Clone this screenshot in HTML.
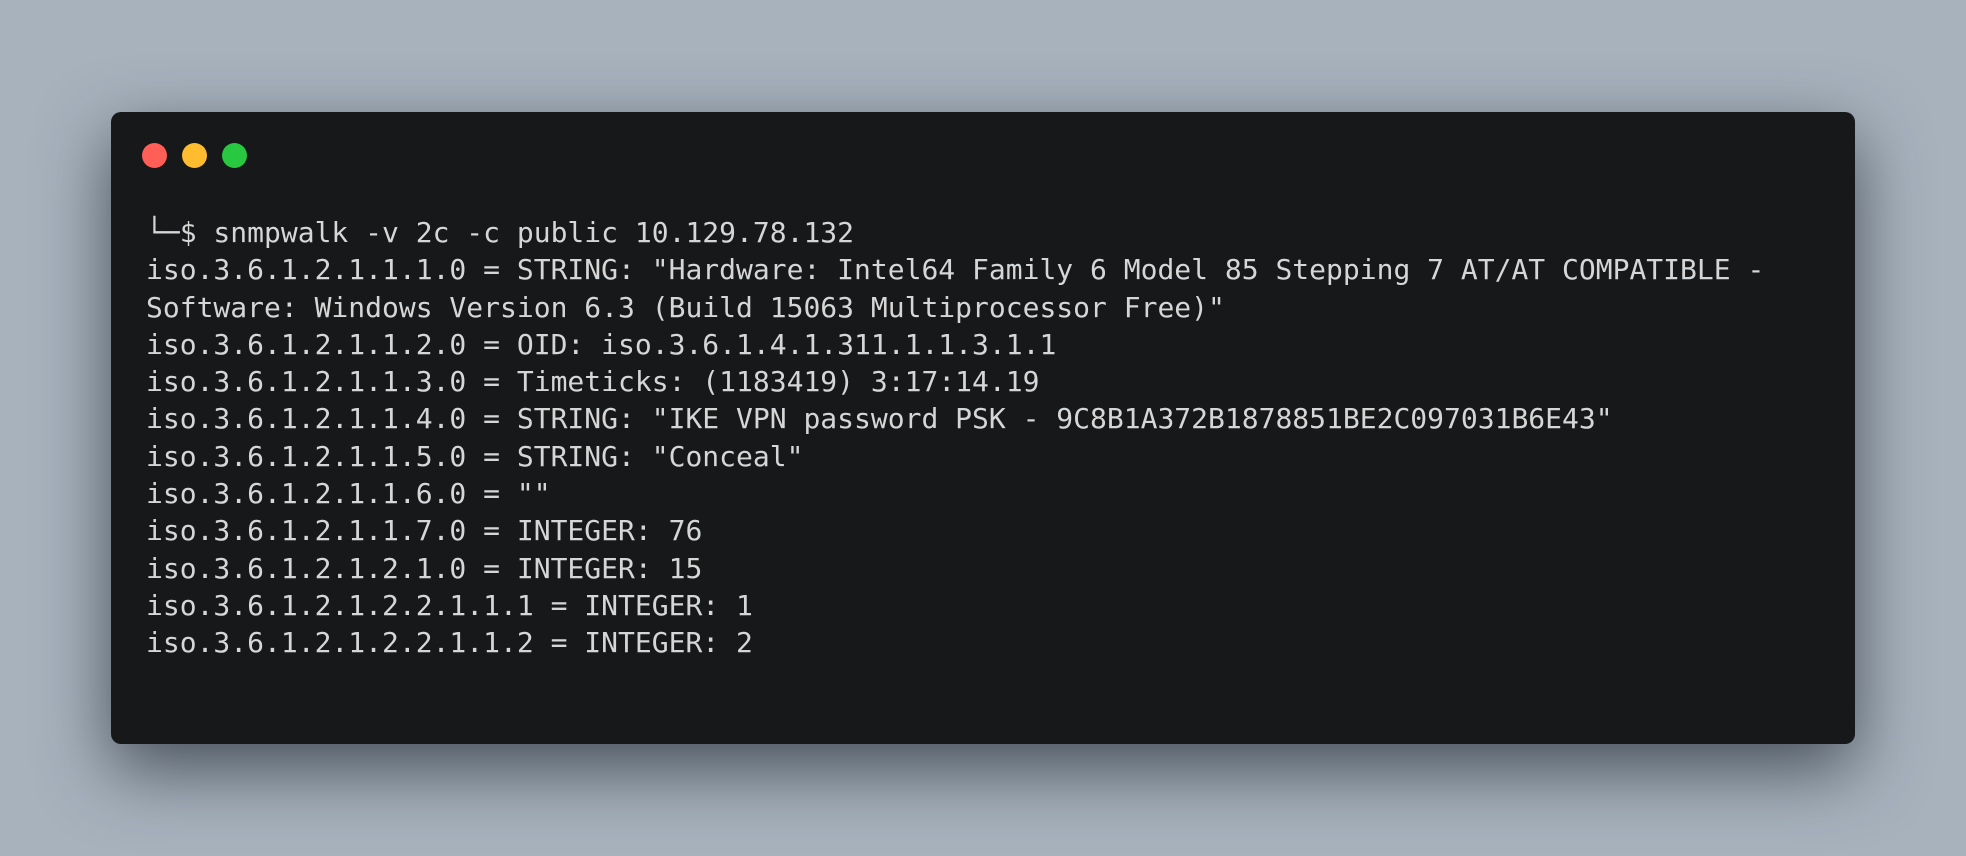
<!DOCTYPE html>
<html><head><meta charset="utf-8"><style>
html,body{margin:0;padding:0}
body{width:1966px;height:856px;overflow:hidden;background:#a7b2bd;position:relative}
.win{position:absolute;left:111px;top:112px;width:1744px;height:632px;background:#17181a;border-radius:10px;box-shadow:0 25px 70px rgba(40,48,58,0.75)}
.dot{position:absolute;top:143px;width:25px;height:25px;border-radius:50%}
pre{position:absolute;left:146px;top:214px;margin:0;font-family:"DejaVu Sans Mono","Liberation Mono",monospace;font-size:28px;line-height:37.3px;color:#d6d6d6}
</style></head><body>
<div class="win"></div>
<div class="dot" style="left:142px;background:#ff5f57"></div>
<div class="dot" style="left:182px;background:#febc2e"></div>
<div class="dot" style="left:222px;background:#28c840"></div>
<pre>└─$ snmpwalk -v 2c -c public 10.129.78.132
iso.3.6.1.2.1.1.1.0 = STRING: "Hardware: Intel64 Family 6 Model 85 Stepping 7 AT/AT COMPATIBLE -
Software: Windows Version 6.3 (Build 15063 Multiprocessor Free)"
iso.3.6.1.2.1.1.2.0 = OID: iso.3.6.1.4.1.311.1.1.3.1.1
iso.3.6.1.2.1.1.3.0 = Timeticks: (1183419) 3:17:14.19
iso.3.6.1.2.1.1.4.0 = STRING: "IKE VPN password PSK - 9C8B1A372B1878851BE2C097031B6E43"
iso.3.6.1.2.1.1.5.0 = STRING: "Conceal"
iso.3.6.1.2.1.1.6.0 = ""
iso.3.6.1.2.1.1.7.0 = INTEGER: 76
iso.3.6.1.2.1.2.1.0 = INTEGER: 15
iso.3.6.1.2.1.2.2.1.1.1 = INTEGER: 1
iso.3.6.1.2.1.2.2.1.1.2 = INTEGER: 2</pre>
</body></html>
